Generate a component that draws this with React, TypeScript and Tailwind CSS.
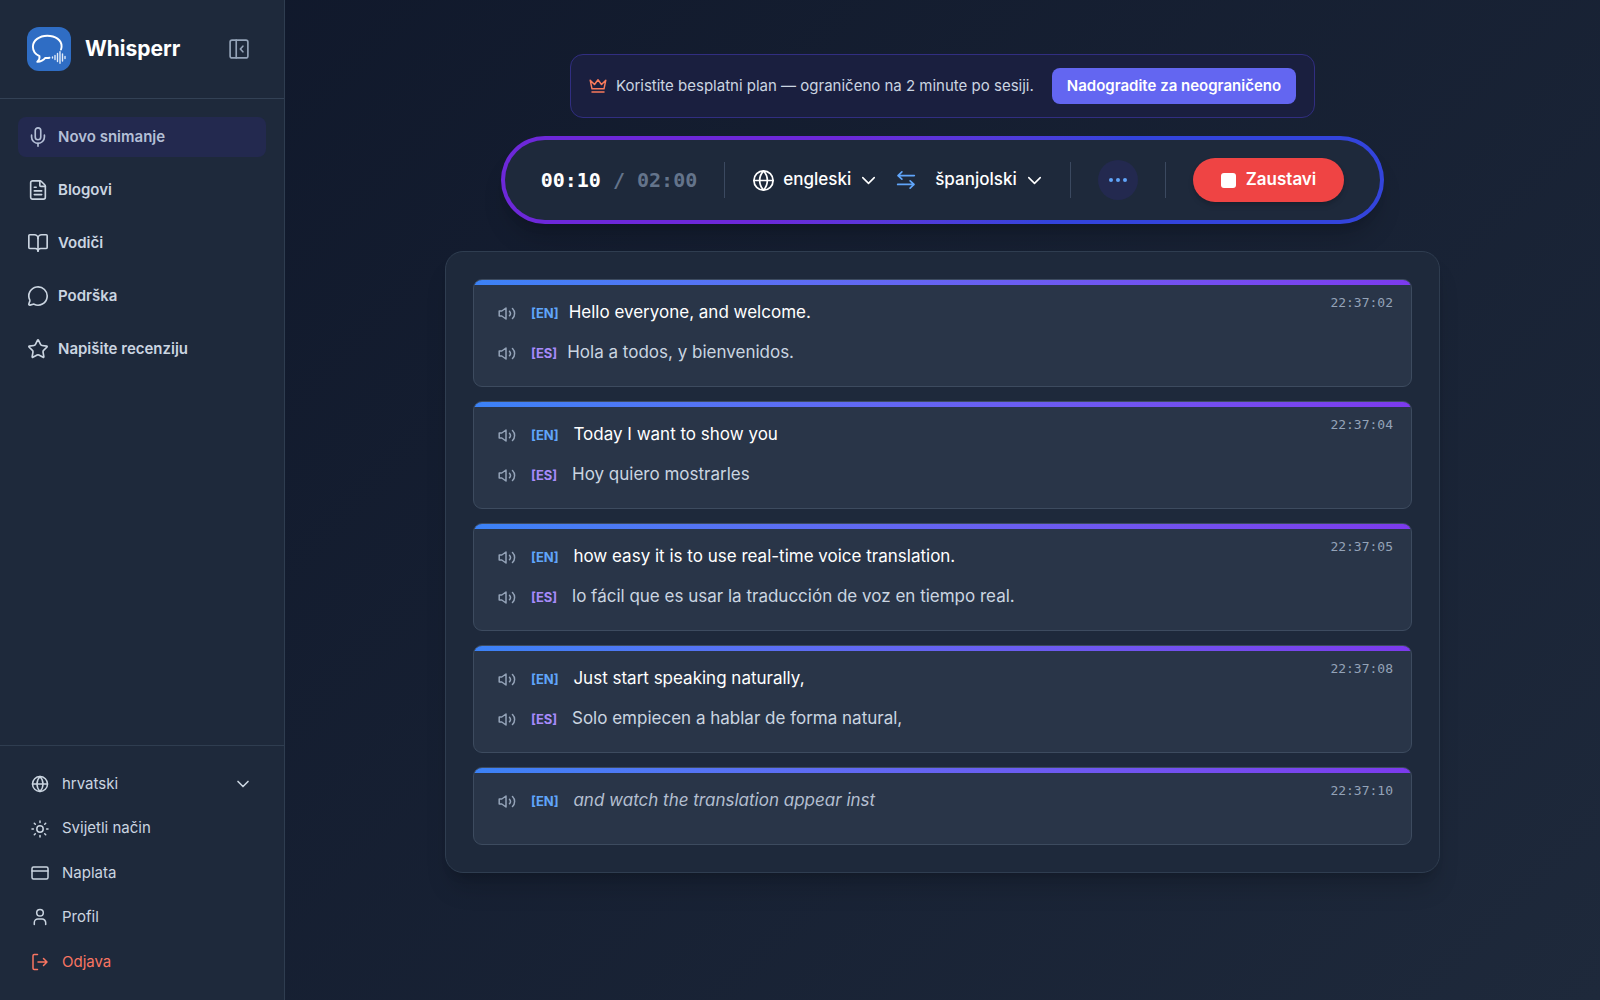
import type { ReactNode } from 'react';
import {
  BookOpen,
  ChevronDown,
  FileText,
  Globe,
  MessageCircle,
  Mic,
  Star,
} from 'lucide-react';

type Line = { lang: 'EN' | 'ES'; text: string; draft?: boolean };
type Segment = { time: string; lines: Line[] };

const navItems = [
  { label: 'Novo snimanje', icon: Mic, active: true },
  { label: 'Blogovi', icon: FileText },
  { label: 'Vodiči', icon: BookOpen },
  { label: 'Podrška', icon: MessageCircle },
  { label: 'Napišite recenziju', icon: Star },
];

// later chunks keep the leading space the recogniser sends
const segments: Segment[] = [
  {
    time: '22:37:02',
    lines: [
      { lang: 'EN', text: 'Hello everyone, and welcome.' },
      { lang: 'ES', text: 'Hola a todos, y bienvenidos.' },
    ],
  },
  {
    time: '22:37:04',
    lines: [
      { lang: 'EN', text: ' Today I want to show you' },
      { lang: 'ES', text: ' Hoy quiero mostrarles' },
    ],
  },
  {
    time: '22:37:05',
    lines: [
      { lang: 'EN', text: ' how easy it is to use real-time voice translation.' },
      { lang: 'ES', text: ' lo fácil que es usar la traducción de voz en tiempo real.' },
    ],
  },
  {
    time: '22:37:08',
    lines: [
      { lang: 'EN', text: ' Just start speaking naturally,' },
      { lang: 'ES', text: ' Solo empiecen a hablar de forma natural,' },
    ],
  },
  {
    time: '22:37:10',
    lines: [{ lang: 'EN', text: ' and watch the translation appear inst', draft: true }],
  },
];

function Icon({ className, children }: { className?: string; children: ReactNode }) {
  return (
    <svg
      viewBox="0 0 18 18"
      className={className}
      fill="none"
      stroke="currentColor"
      strokeWidth="1.5"
      strokeLinecap="round"
      strokeLinejoin="round"
      aria-hidden="true"
    >
      {children}
    </svg>
  );
}

function Logo() {
  return (
    <svg viewBox="0 0 44 44" className="size-11 shrink-0" fill="none" aria-hidden="true">
      <rect width="44" height="44" rx="12" fill="#2f6dc4" />
      <path
        d="M34 22.5c.4-1 .6-2.1.6-3.200C34.600 13 28.300 8.700 20.300 8.700S5.900 13.500 5.900 19.700c0 4.100 2.600 7.600 6.600 9.400.3 2.300-.6 4.300-2.200 5.700 3.500-.2 6.200-1.600 8-3.900 1.800.2 2.800.1 4.200-.2"
        stroke="#fff"
        strokeWidth="1.9"
        strokeLinecap="round"
        strokeLinejoin="round"
      />
      <path
        d="M25.500 30v1M28 28.500v4M30.500 26.500v8M33 24.800v11.500M35.500 27v7M38 29.500v2"
        stroke="#e3ecf9"
        strokeWidth="1.4"
        strokeLinecap="round"
      />
    </svg>
  );
}

function Sidebar() {
  return (
    <aside className="flex w-[285px] shrink-0 flex-col border-r border-[#2f3d50] bg-[#1e293b] text-[#cbd5e1]">
      <div className="flex h-[99px] items-center border-b border-[#334155] px-[27px]">
        <Logo />
        <span className="ml-[14px] text-[21px] font-bold text-white">Whisperr</span>
        <button type="button" aria-label="Sakrij izbornik" className="mr-2 ml-auto text-[#94a3b8]">
          <Icon className="size-5">
            <rect x="1" y="1" width="16" height="16" rx="1.8" />
            <path d="M6.500 1v16M12.500 6.500 10.200 9l2.300 2.500" />
          </Icon>
        </button>
      </div>

      <nav className="flex flex-1 flex-col gap-[13px] px-[18px] pt-[18px]">
        {navItems.map(({ label, icon: NavIcon, active }) => (
          <a
            key={label}
            href="#"
            aria-current={active ? 'page' : undefined}
            className={`flex h-10 items-center gap-[9px] rounded-lg px-[9px] text-[15px] font-semibold ${
              active ? 'bg-[#23294f] text-[#b4bfd6]' : ''
            }`}
          >
            <NavIcon className="size-[22px]" strokeWidth={1.8} />
            {label}
          </a>
        ))}
      </nav>

      <div className="border-t border-[#2f3d50] px-[31px] py-4">
        <div className="grid h-[222px] auto-rows-fr text-[15px]">
          <button type="button" className="flex items-center gap-[13px]">
            <Globe className="size-[18px]" />
            hrvatski
            <ChevronDown className="ml-auto size-5" />
          </button>
          <button type="button" className="flex items-center gap-[13px]">
            <Icon className="size-[18px]">
              <circle cx="9" cy="9" r="3.2" />
              <path d="M9 1v1.400M9 15.600V17M1 9h1.400M15.600 9H17M3.300 3.300l1 1M13.700 13.700l1 1M3.300 14.700l1-1M13.700 4.300l1-1" />
            </Icon>
            Svijetli način
          </button>
          <a href="#" className="flex items-center gap-[13px]">
            <Icon className="size-[18px]">
              <rect x="1" y="3" width="16" height="12" rx="1.5" />
              <path d="M1 7h16" />
            </Icon>
            Naplata
          </a>
          <a href="#" className="flex items-center gap-[13px]">
            <Icon className="size-[18px]">
              <circle cx="9" cy="4.8" r="3.3" />
              <path d="M3.300 16.500v-1.800a3.600 3.600 0 0 1 3.600-3.600h4.200a3.600 3.600 0 0 1 3.600 3.600v1.800" />
            </Icon>
            Profil
          </a>
          <button type="button" className="flex items-center gap-[13px] text-[#f97562]">
            <Icon className="size-[18px]">
              <path d="M6.500 1.500H3.200A1.200 1.200 0 0 0 2 2.700v12.600a1.200 1.200 0 0 0 1.200 1.200h3.300M7 9h9M12.500 5.500 16 9l-3.500 3.500" />
            </Icon>
            Odjava
          </button>
        </div>
      </div>
    </aside>
  );
}

function UpgradeBanner() {
  return (
    <div className="flex h-16 items-center rounded-[13px] border border-[#312e81] bg-[#1a1f3f] px-[18px] text-[15px] text-[#cbd5e1]">
      <Icon className="size-[18px] text-[#f97a5c]">
        <path d="M3 11.800 1.200 3.200 5.500 7.500 9 2.800l3.500 4.700 4.300-4.300L15 11.800ZM3 15h12" />
      </Icon>
      <span className="ml-[9px]">Koristite besplatni plan — ograničeno na 2 minute po sesiji.</span>
      <button type="button" className="ml-[18px] h-9 rounded-lg bg-[#6366f1] px-[15px] font-semibold text-white">
        Nadogradite za neograničeno
      </button>
    </div>
  );
}

function Divider() {
  return <div className="h-9 w-px bg-[#3b4960]" />;
}

function ControlBar() {
  return (
    <div className="rounded-full bg-linear-135 from-[#6d28d9] from-35% to-[#3344dc] to-65% p-1 shadow-xl shadow-black/15">
      <div className="flex h-20 items-center rounded-full bg-[#1e293b] px-9 text-[17px] font-medium text-white">
        <div className="font-['DejaVu_Sans_Mono',monospace] text-xl font-bold whitespace-pre">
          00:10<span className="text-[#64748b]"> / 02:00</span>
        </div>
        <div className="mx-[27px]">
          <Divider />
        </div>
        <button type="button" className="flex items-center">
          <Globe className="size-[23px]" strokeWidth={1.8} />
          <span className="ml-2">engleski</span>
          <ChevronDown className="ml-[6px] size-[23px]" strokeWidth={1.6} />
        </button>
        <button type="button" aria-label="Zamijeni jezike" className="mr-[19px] ml-4 text-[#60a5fa]">
          <Icon className="size-5">
            <path d="M16.500 5H1.800M5.300 1.700 1.800 5l3.500 3.300M1.500 13h14.700M12.700 9.700l3.500 3.300-3.500 3.300" />
          </Icon>
        </button>
        <button type="button" className="flex items-center">
          <span>španjolski</span>
          <ChevronDown className="ml-[6px] size-[23px]" strokeWidth={1.6} />
        </button>
        <div className="mr-[27px] ml-6">
          <Divider />
        </div>
        <button
          type="button"
          aria-label="Više opcija"
          className="flex size-10 items-center justify-center gap-[3px] rounded-full bg-[#23294f]"
        >
          <i className="size-1 rounded-full bg-[#60a5fa]" />
          <i className="size-1 rounded-full bg-[#60a5fa]" />
          <i className="size-1 rounded-full bg-[#60a5fa]" />
        </button>
        <div className="mx-[27px]">
          <Divider />
        </div>
        <button
          type="button"
          className="flex h-11 items-center gap-[10px] rounded-full bg-[#ef4444] px-7 font-semibold shadow-md shadow-black/15"
        >
          <span className="size-[15px] rounded-[3px] bg-white" />
          Zaustavi
        </button>
      </div>
    </div>
  );
}

function TranscriptCard({ time, lines }: Segment) {
  return (
    <article className="min-h-[78px] overflow-hidden rounded-[9px] border border-[#3d4b5f] bg-[#293548]">
      <div className="h-[5px] bg-linear-to-r from-[#3b82f6] to-[#7c3aed]" />
      <div className="flex items-start justify-between pr-[18px] pb-[13px] pl-6">
        <div className="pt-2">
          {lines.map((line) => (
            <div key={line.lang} className="flex h-10 items-center">
              <button type="button" aria-label="Reproduciraj" className="text-[#94a3b8]">
                <Icon className="size-[18px]">
                  <path d="M1.200 7v5h2.600l4.200 3V4L3.800 7ZM11.500 7.200a3.500 3.500 0 0 1 0 4.600M14.500 4.500a7 7 0 0 1 0 10" />
                </Icon>
              </button>
              <p className="ml-[15px] flex items-baseline">
                <span
                  className={`text-[13px] font-bold ${line.lang === 'EN' ? 'text-[#60a5fa]' : 'text-[#a78bfa]'}`}
                >
                  [{line.lang}]
                </span>
                <span
                  className={`ml-[10px] text-[17px] whitespace-pre ${
                    line.draft ? 'text-[#b4bfd0] italic' : line.lang === 'EN' ? 'text-white' : 'text-[#cbd5e1]'
                  }`}
                >
                  {line.text}
                </span>
              </p>
            </div>
          ))}
        </div>
        <time className="pt-2 font-['DejaVu_Sans_Mono',monospace] text-[13px] text-[#94a3b8]">{time}</time>
      </div>
    </article>
  );
}

export default function App() {
  return (
    <div className="flex min-h-screen bg-linear-135 from-[#0f172a] to-[#1e293b] font-['Inter',sans-serif]">
      <Sidebar />
      <main className="flex flex-1 flex-col items-center px-[160px] pt-[54px]">
        <UpgradeBanner />
        <div className="mt-[18px]">
          <ControlBar />
        </div>
        <section className="mt-[27px] flex w-full flex-col gap-[14px] rounded-[18px] border border-[#2f3d50] bg-[#1e293b] p-[27px] shadow-xl shadow-black/15">
          {segments.map((segment) => (
            <TranscriptCard key={segment.time} {...segment} />
          ))}
        </section>
      </main>
    </div>
  );
}
